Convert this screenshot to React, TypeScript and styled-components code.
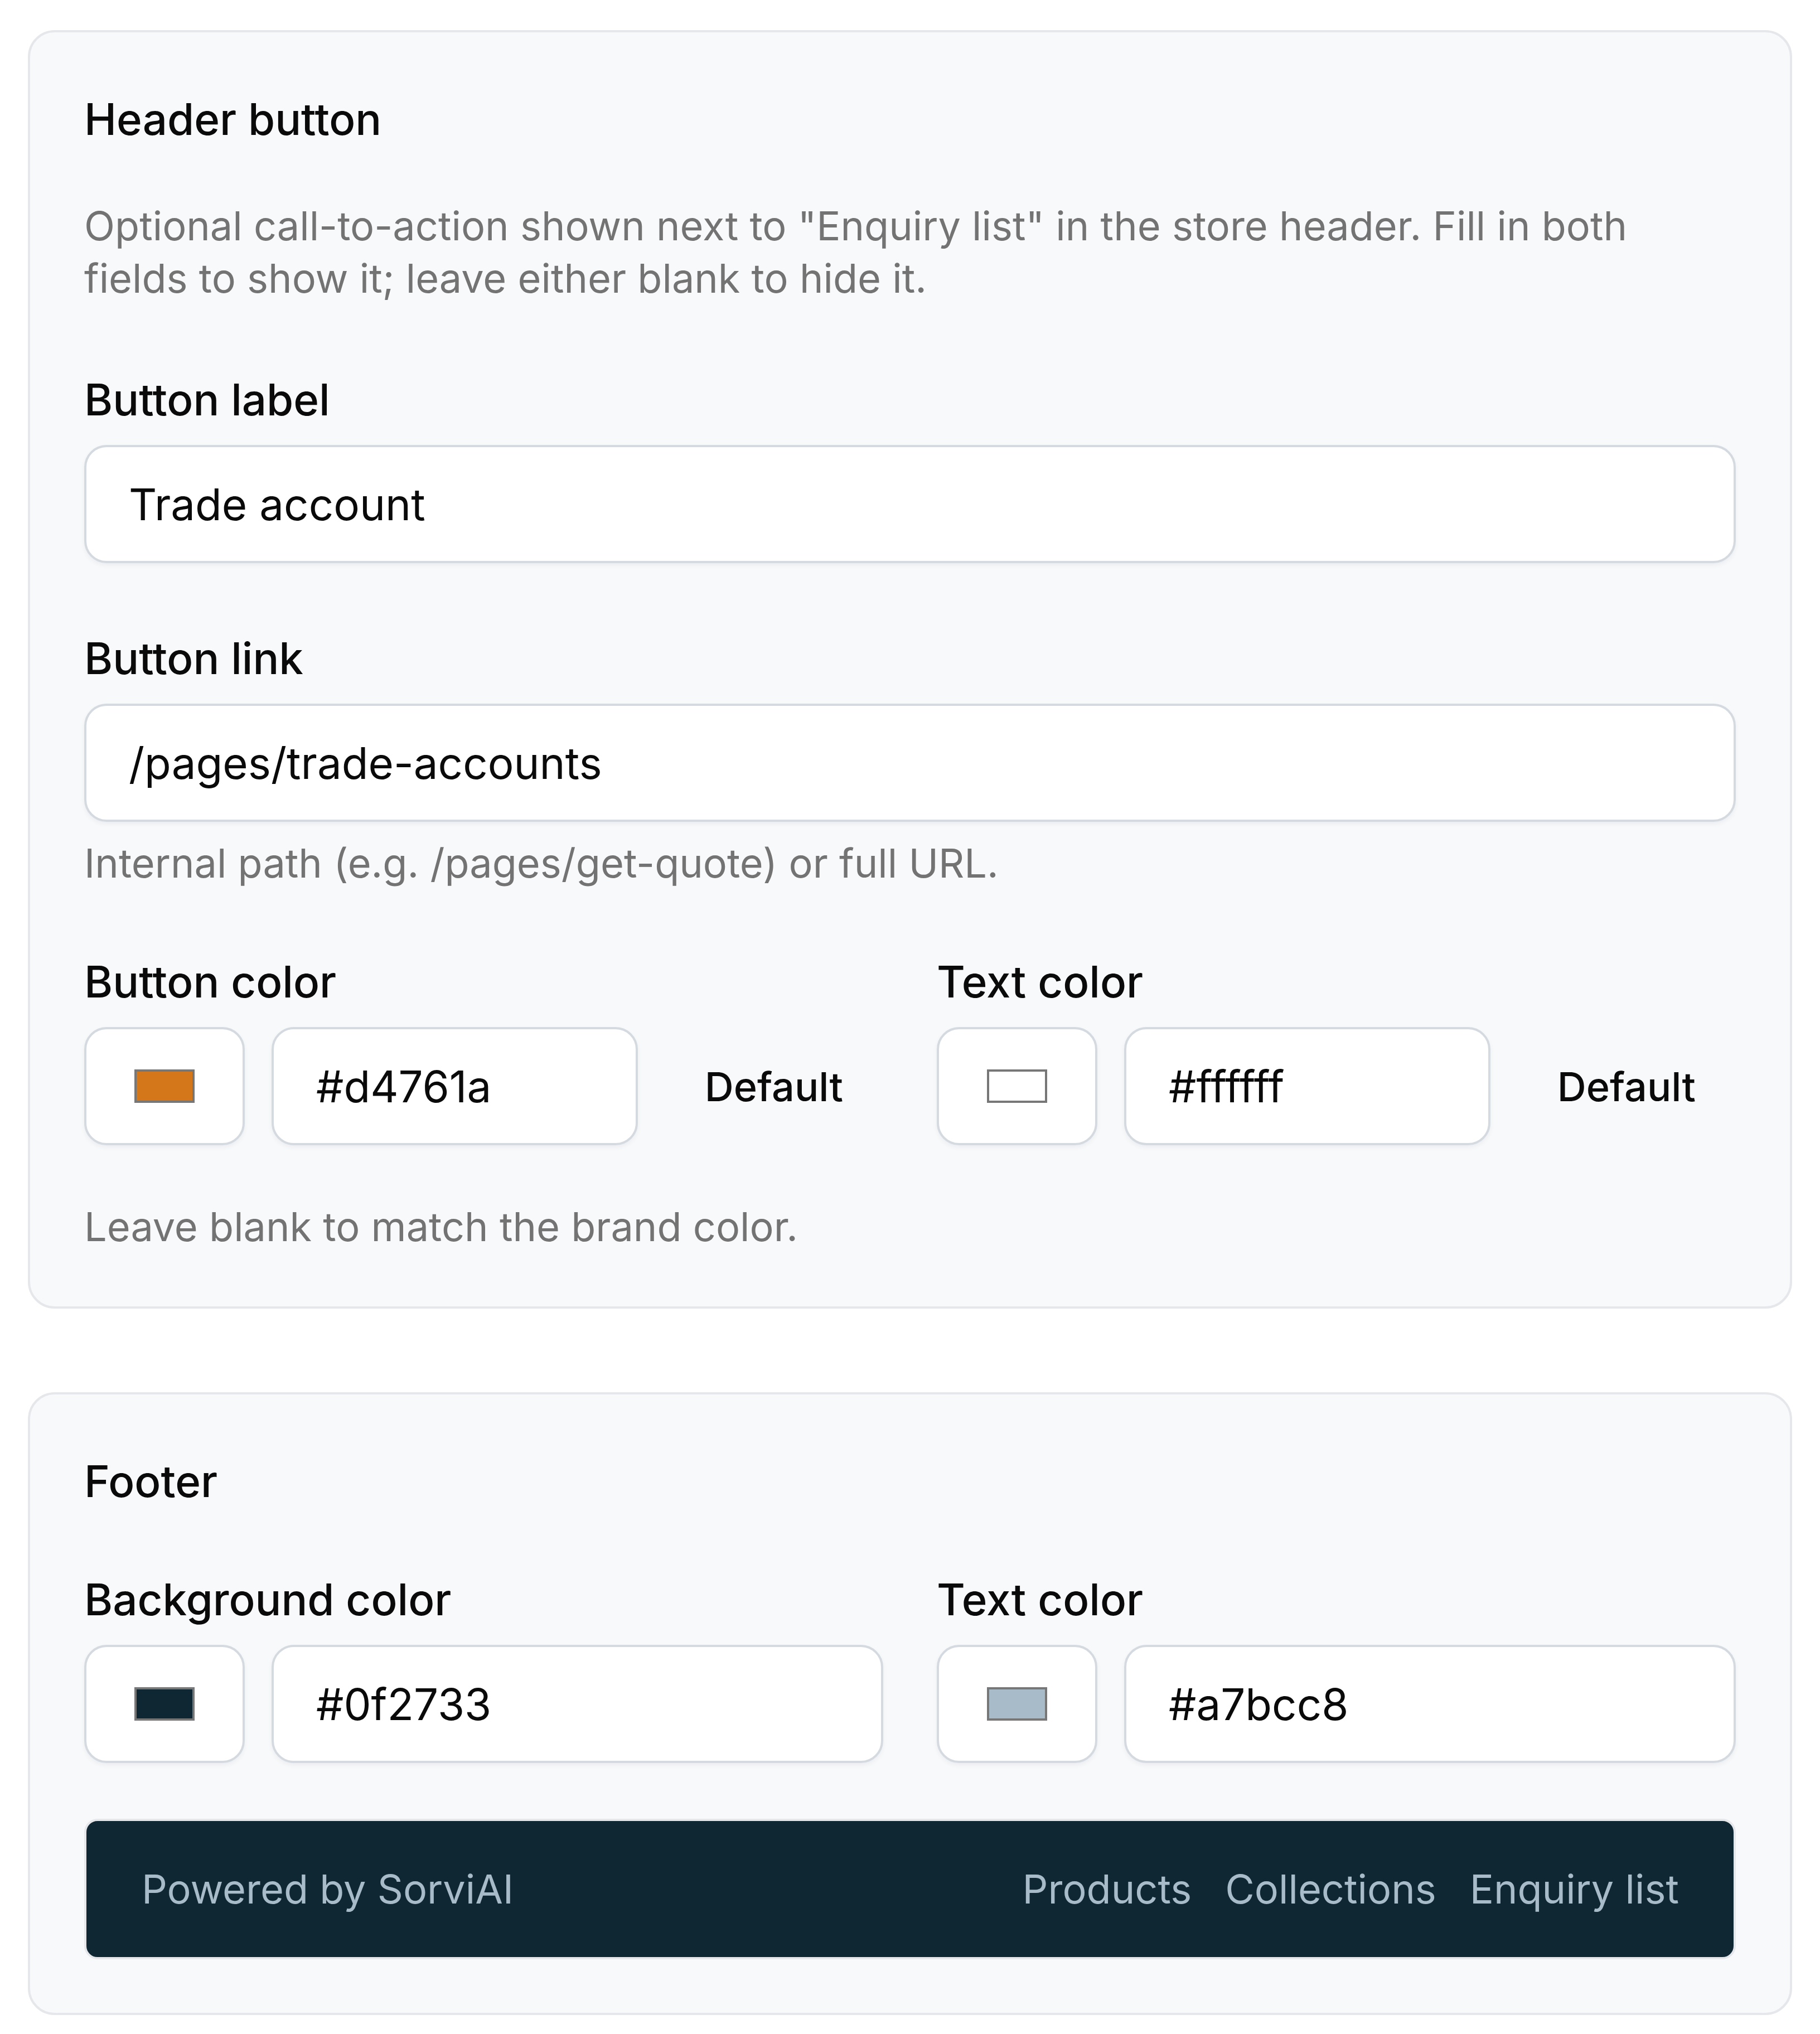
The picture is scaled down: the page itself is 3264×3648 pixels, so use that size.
import styled, { createGlobalStyle } from 'styled-components';

const GlobalStyle = createGlobalStyle`
  html, body {
    margin: 0;
    padding: 0;
    background: #ffffff;
  }
  body {
    font-family: Inter, "Noto Sans", "Liberation Sans", sans-serif;
    color: #0a0a0a;
  }
  * {
    box-sizing: border-box;
  }
`;

const Page = styled.div`
  padding: 54px 50px 32px;
  display: flex;
  flex-direction: column;
`;

const Card = styled.section<{ $mt?: number }>`
  margin-top: ${p => p.$mt ?? 0}px;
  background: #f8f9fb;
  border: 4px solid #e5e7eb;
  border-radius: 48px;
  padding: 96px 97px;
  display: flex;
  flex-direction: column;
`;

const Title = styled.h2`
  margin: 0;
  font-size: 78px;
  line-height: 120px;
  font-weight: 500;
  color: #0a0a0a;
`;

const Muted = styled.p<{ $mt?: number }>`
  margin: ${p => p.$mt ?? 0}px 0 0;
  font-size: 72px;
  line-height: 94px;
  font-weight: 400;
  color: #737373;
`;

const Field = styled.div<{ $mt?: number }>`
  margin-top: ${p => p.$mt ?? 0}px;
  display: flex;
  flex-direction: column;
  min-width: 0;
`;

const Label = styled.label`
  font-size: 78px;
  line-height: 108px;
  font-weight: 500;
  color: #0a0a0a;
  margin-bottom: 27px;
`;

const TextInput = styled.input`
  width: 100%;
  min-width: 0;
  height: 212px;
  padding: 0 76px;
  border: 4px solid #d4dae0;
  border-radius: 40px;
  background: #ffffff;
  box-shadow: 0 4px 8px rgba(15, 23, 42, 0.05);
  font-family: Inter, "Noto Sans", "Liberation Sans", sans-serif;
  font-size: 78px;
  color: #0a0a0a;
  outline: none;
`;

const ColorGrid = styled.div<{ $mt?: number }>`
  margin-top: ${p => p.$mt ?? 0}px;
  display: grid;
  grid-template-columns: 1fr 1fr;
  column-gap: 96px;
`;

const ColorRow = styled.div`
  display: flex;
  align-items: center;
  gap: 48px;
`;

const SwatchBox = styled.div`
  flex: 0 0 288px;
  height: 212px;
  border: 4px solid #d4dae0;
  border-radius: 40px;
  background: #ffffff;
  box-shadow: 0 4px 8px rgba(15, 23, 42, 0.05);
  display: flex;
  align-items: center;
  justify-content: center;
`;

const Swatch = styled.span<{ $color: string }>`
  width: 108px;
  height: 60px;
  border: 4px solid #777777;
  background: ${p => p.$color};
`;

const DefaultButton = styled.button`
  flex: none;
  height: 212px;
  padding: 0 72px;
  border: none;
  background: transparent;
  font-family: Inter, "Noto Sans", "Liberation Sans", sans-serif;
  font-size: 72px;
  font-weight: 500;
  color: #0a0a0a;
  cursor: pointer;
`;

const FooterPreview = styled.div<{ $bg: string; $fg: string; $mt?: number }>`
  margin-top: ${p => p.$mt ?? 0}px;
  display: flex;
  align-items: center;
  justify-content: space-between;
  padding: 75px 98px 75px 99px;
  border: 4px solid #e5e7eb;
  border-radius: 24px;
  background: ${p => p.$bg};
  color: ${p => p.$fg};
  font-size: 72px;
  line-height: 94px;
`;

const FooterLinks = styled.nav`
  display: flex;
  gap: 60px;
`;

type ColorFieldProps = {
  label: string;
  value: string;
  withDefault?: boolean;
};

function ColorField({ label, value, withDefault }: ColorFieldProps) {
  return (
    <Field>
      <Label>{label}</Label>
      <ColorRow>
        <SwatchBox>
          <Swatch $color={value} />
        </SwatchBox>
        <TextInput defaultValue={value} />
        {withDefault && <DefaultButton>Default</DefaultButton>}
      </ColorRow>
    </Field>
  );
}

export default function App() {
  const footerBg = '#0f2733';
  const footerText = '#a7bcc8';

  return (
    <>
      <GlobalStyle />
      <Page>
        <Card>
          <Title>Header button</Title>
          <Muted $mt={84}>
            Optional call-to-action shown next to "Enquiry list" in the store header. Fill in both
            fields to show it; leave either blank to hide it.
          </Muted>

          <Field $mt={117}>
            <Label>Button label</Label>
            <TextInput defaultValue="Trade account" />
          </Field>

          <Field $mt={117}>
            <Label>Button link</Label>
            <TextInput defaultValue="/pages/trade-accounts" />
            <Muted $mt={27}>Internal path (e.g. /pages/get-quote) or full URL.</Muted>
          </Field>

          <ColorGrid $mt={112}>
            <ColorField label="Button color" value="#d4761a" withDefault />
            <ColorField label="Text color" value="#ffffff" withDefault />
          </ColorGrid>

          <Muted $mt={99}>Leave blank to match the brand color.</Muted>
        </Card>

        <Card $mt={150}>
          <Title>Footer</Title>

          <ColorGrid $mt={98}>
            <ColorField label="Background color" value={footerBg} />
            <ColorField label="Text color" value={footerText} />
          </ColorGrid>

          <FooterPreview $mt={100} $bg={footerBg} $fg={footerText}>
            <span>Powered by SorviAI</span>
            <FooterLinks>
              <span>Products</span>
              <span>Collections</span>
              <span>Enquiry list</span>
            </FooterLinks>
          </FooterPreview>
        </Card>
      </Page>
    </>
  );
}
